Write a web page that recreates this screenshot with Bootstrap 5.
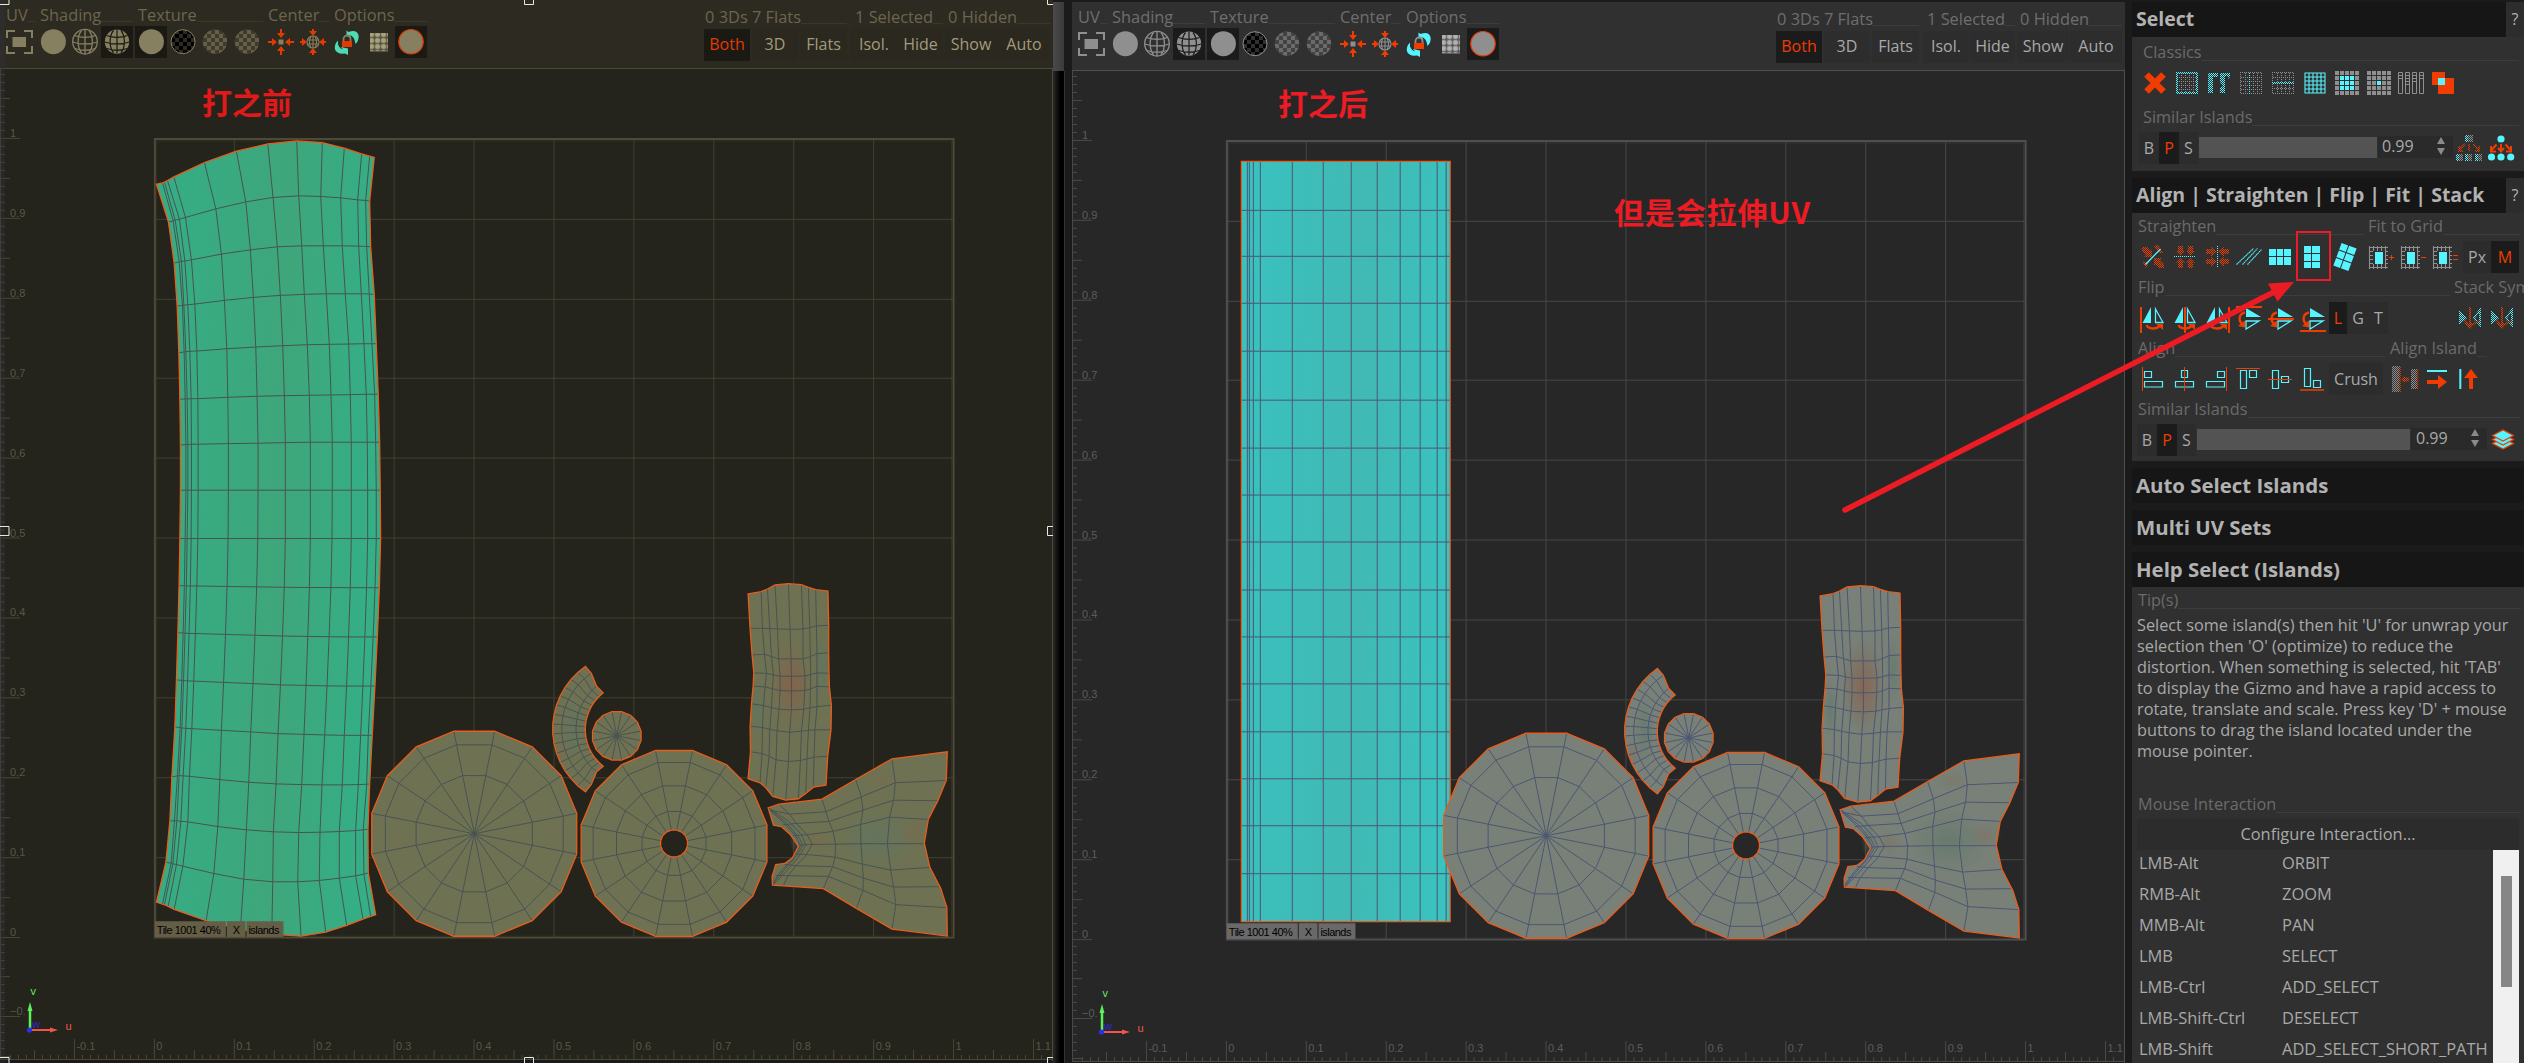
<!DOCTYPE html>
<html lang="en" data-bs-theme="dark">
<head>
<meta charset="utf-8">
<title>UV Editor</title>
<link href="https://cdn.jsdelivr.net/npm/bootstrap@5.3.0/dist/css/bootstrap.min.css" rel="stylesheet">
<style>
body{width:2524px;height:1063px;overflow:hidden;background:#1b1b1b;font-family:"Open Sans","Noto Sans",sans-serif;font-size:16px;line-height:1.3;color:#a9a9a9}
.uvpane{--bar:#303030;--cv:#272727;--edge:#4f4f4f;--fg:#8f8f8f;--dim:#6e6e6e;--txt:#a9a9a9;--hi:#cfcfcf;--org:#f03c00;--cy:#55f4ff;--dk:#1b1b1b;--btn:#2d2d2d;--ln:#3d3d3d;
 --grid:#474747;--tick:#4a4a4a;--num:#5c5c5c;--isl:#788077;--wire:#4c5672;--tag:#696969;width:1053px;height:1061px;flex:none;overflow:hidden;background:#1b1b1b}
.olive{--bar:#2d2a22;--cv:#24231c;--edge:#4e4a37;--fg:#868061;--dim:#6c664c;--txt:#a39b7c;--hi:#c5bd94;--org:#e23a00;--cy:#4fd9b4;--dk:#1b1913;--btn:#2a281f;--ln:#3b3829;
 --grid:#434030;--tick:#4a4737;--num:#5c5742;--isl:#6e7252;--wire:#485352;--tag:#645e47;height:1063px}
.topbar{height:68px;background:var(--bar);padding:8px 0 0 3px}
.grp{margin-right:2px}
.lab{height:18px;white-space:nowrap;color:var(--dim);line-height:14px;padding-left:3px;font-size:16.4px}
.lab i{flex:1;height:14px;border-bottom:1px solid var(--ln)}
.ic{width:32px;height:32px;display:block;flex:none}
.on{background:var(--dk)}
.tb{height:32px;line-height:32px;text-align:center;background:var(--btn);color:var(--txt)}
.tb.on{background:var(--dk);color:var(--org)}
.lowered{margin-top:2px}
.lowered .lab{padding-left:1px}
.lowered .tb{margin-top:1px;line-height:31px}
.stage{display:block;border-top:1px solid var(--edge);border-right:1px solid var(--edge);background:var(--cv)}
.stage text{font-family:"Liberation Sans",sans-serif;font-size:11px}
.gutter{width:19px;flex:none;padding-top:2px}
.gut-a{width:11px;height:69px;background:linear-gradient(90deg,#4a4a4a,#3a3a3a)}
.gut-b{width:12px;height:992px;background:linear-gradient(90deg,#292929,#000 65%);border-right:1px solid #333}
.side{--fg:#8f8f8f;--org:#f03c00;--cy:#55f4ff;--hi:#cfcfcf;width:392px;flex:none;margin-left:7px;padding-top:2px;overflow:hidden}
.hd{height:35px;line-height:34px;margin-bottom:7px;background:#161616;color:#b2b2b2;font-weight:700;font-size:20.4px;padding-left:4px;white-space:nowrap}
.hd.open{margin-bottom:0}
.hd.tool{font-size:19.5px}
.hd span{width:18px;background:#2d2d2d;font-weight:400;font-size:16px;text-align:center}
.bd{background:#303030;margin-bottom:7px}
.lb{height:19px;line-height:19px;margin-bottom:5px;color:#6b6b6b;white-space:nowrap;font-size:16.3px}
.lb i{flex:1;height:18px;border-bottom:1px solid #3d3d3d}
.rw{height:32px;line-height:32px;margin-bottom:5px}
.bt{background:#2c2c2c;text-align:center;flex:none}
.bt.on{background:#1b1b1b;color:#f03c00}
.sld{height:21px;margin:5px 1px 0 1px;background:#535353}
.fld{height:22px;line-height:21px;margin-top:4px;background:#2a2a2a;padding-left:5px}
.tips{height:168px;line-height:21px;padding-left:5px;white-space:nowrap;font-size:16.3px}
.cfg{height:31px;line-height:30px;background:#2c2c2c;margin:0 5px;text-align:center;font-size:16.4px}
.keys div{line-height:25px;height:31px;font-size:16.45px}
.keys span{width:143px}
.sbar{width:26px;background:#f0f0f0;margin-right:5px;padding:26px 7px 0 8px}
.sbar div{height:111px;background:#868686}
.notes{left:0;top:0;width:2524px;height:1063px;pointer-events:none}
.notes text{font-family:"Noto Sans CJK SC",sans-serif;font-weight:700;font-size:30px;fill:#ed1c24}
</style>
</head>
<body class="position-relative">
<svg width="0" height="0" class="position-absolute">
<defs>
<pattern id="ck" width="2" height="2" patternUnits="userSpaceOnUse"><path d="M0 0h1v1h-1zM1 1h1v1h-1z" fill="#fff"/></pattern>
<mask id="off" maskUnits="userSpaceOnUse" x="0" y="0" width="32" height="32"><rect width="32" height="32" fill="url(#ck)"/></mask>
<pattern id="pc" width="8" height="8" patternUnits="userSpaceOnUse"><path d="M0 0h4v4h-4zM4 4h4v4h-4z" style="fill:var(--fg)"/></pattern>
<linearGradient id="gl" x1="0" x2="1" y1="0" y2=".1"><stop offset="0" stop-color="#34ae86"/><stop offset=".35" stop-color="#3aa97f"/><stop offset=".6" stop-color="#3fa67b"/><stop offset="1" stop-color="#34af86"/></linearGradient>
<linearGradient id="gr" x1="0" x2="1" y1="0" y2=".1"><stop offset="0" stop-color="#39c2c0"/><stop offset=".6" stop-color="#41b9b4"/><stop offset="1" stop-color="#3ac2bf"/></linearGradient>
<radialGradient id="hot"><stop offset="0" stop-color="#8e5c46" stop-opacity=".75"/><stop offset=".55" stop-color="#86624b" stop-opacity=".4"/><stop offset="1" stop-color="#7c6a4a" stop-opacity="0"/></radialGradient>
<radialGradient id="cool"><stop offset="0" stop-color="#5b7568" stop-opacity=".55"/><stop offset="1" stop-color="#5b7568" stop-opacity="0"/></radialGradient>
</defs>
<symbol id="fit" viewBox="0 0 32 32"><path d="M4 12V5h8M21 5h8v7M29 20v7h-8M12 27H4v-7" fill="none" style="stroke:var(--fg)" stroke-width="2"/><path d="M9.500 11h13.500v10h-13.500z" style="fill:var(--fg)"/></symbol>
<symbol id="disc" viewBox="0 0 32 32"><circle cx="16.400" cy="15.700" r="12.500" style="fill:var(--fg)"/></symbol>
<symbol id="ring" viewBox="0 0 32 32"><circle cx="16" cy="15.700" r="12.200" style="fill:var(--fg);stroke:var(--org)" stroke-width="1.200"/></symbol>
<symbol id="globe" viewBox="0 0 32 32"><g fill="none" style="stroke:var(--fg)" stroke-width="1.300"><circle cx="16" cy="15.700" r="12.300"/><path d="M16 3.500v24M12.500 4.500C8 10 8 21 12.500 27M20 4.500C24.500 10 24.500 21 20 27M5.500 9.500c6 2.500 15 2.500 21 0M3.800 16c7 2.500 17.500 2.500 24.500 0M5.800 22.500c6 2 14.500 2 20.500 0"/></g></symbol>
<symbol id="globef" viewBox="0 0 32 32"><circle cx="16" cy="15.700" r="12.200" style="fill:var(--fg)"/><g fill="none" style="stroke:var(--dk)" stroke-width="1.200"><path d="M16 3.500v24M12.500 4.500C8 10 8 21 12.500 27M20 4.500C24.500 10 24.500 21 20 27M5.500 9.500c6 2.500 15 2.500 21 0M3.800 16c7 2.500 17.500 2.500 24.500 0M5.800 22.500c6 2 14.500 2 20.500 0"/></g></symbol>
<symbol id="chk" viewBox="0 0 32 32"><circle cx="16" cy="15.700" r="12" fill="url(#pc)" style="stroke:var(--fg)" stroke-width="1"/></symbol>
<symbol id="chkd" viewBox="0 0 32 32"><circle cx="16" cy="15.700" r="12.200" style="fill:var(--fg)" opacity=".62"/><circle cx="16" cy="15.700" r="12.200" fill="url(#pc)" opacity=".38"/></symbol>
<symbol id="ctr" viewBox="0 0 32 32"><path d="M15 3h2v4h3l-4 5-4-5h3zM15 29h2v-4h3l-4-5-4 5h3zM3 15v2h4v3l5-4-5-4v3zM29 15v2h-4v3l-5-4 5-4v3z" style="fill:var(--org)"/><path d="M13.500 13.500h5v5h-5z" style="fill:var(--fg)"/></symbol>
<symbol id="ctr2" viewBox="0 0 32 32"><path d="M15 3h2v2h3l-4 5-4-5h3zM15 29h2v-2h3l-4-5-4 5h3zM3 15v2h2v3l5-4-5-4v3zM29 15v2h-2v3l-5-4 5-4v3z" style="fill:var(--org)"/><g fill="none" style="stroke:var(--fg)" stroke-width="1.100"><circle cx="16" cy="16" r="6"/><path d="M16 10v12M10 14h12M10 18h12M14 10q-3 6 0 12M18 10q3 6 0 12"/></g></symbol>
<symbol id="rot" viewBox="0 0 32 32"><path d="M15.500 10V4.500l2 1.500q8-3 10 3 1 5-3 9-1-8-6-9l2 2.500zM17 22.500v6.500l-3-1.500q-8 1-10-4-1-5 3-9-1 7 5 9l-2-2.500z" style="fill:var(--cy)"/><path d="M12.500 15v-2a3.500 3.500 0 0 1 7 0v2" fill="none" style="stroke:var(--fg)" stroke-width="1.800"/><path d="M11 15h10v6h-10z" style="fill:var(--org)"/></symbol>
<symbol id="plaid" viewBox="0 0 32 32"><path d="M7 7h18v18.500h-18z" style="fill:var(--fg)"/><path d="M8.500 7v18M14.500 7v18M20.500 7v18M7 8.500h18M7 14.500h18M7 20.500h18" style="stroke:var(--hi)" stroke-width="2.600" stroke-opacity=".55"/><path d="M11.500 7v18M17.500 7v18M23.500 7v18M7 11.500h18M7 17.500h18M7 23.500h18" stroke="#222" stroke-width="1.400" stroke-opacity=".45"/></symbol>
<symbol id="x" viewBox="0 0 32 32"><path d="M7.500 7.500l17 17M24.500 7.500l-17 17" style="stroke:var(--org)" stroke-width="6.500"/></symbol>
<symbol id="g1" viewBox="0 0 32 32"><g mask="url(#off)" fill="none" shape-rendering="crispEdges"><path d="M10.500 6v20M14.500 6v20M18.500 6v20M22.500 6v20M6 10.500h20M6 14.500h20M6 18.500h20M6 22.500h20" style="stroke:var(--fg)"/><path d="M6 6h20v20h-20z" style="stroke:var(--cy)" stroke-width="2"/></g></symbol>
<symbol id="g2" viewBox="0 0 32 32"><g mask="url(#off)" style="fill:var(--cy)"><path d="M5 6h10v4h-5v16h-5zM17 6h10v4l-2 2v-3h-3v17h-5v-5l3-2-3-4z"/></g></symbol>
<symbol id="g3" viewBox="0 0 32 32"><g mask="url(#off)" fill="none" shape-rendering="crispEdges"><path d="M5.500 5.500h21v21h-21zM10.500 6v20M18.500 6v20M22.500 6v20M6 10.500h20M6 14.500h20M6 18.500h20M6 22.500h20" style="stroke:var(--fg)"/><path d="M14.500 5v22" style="stroke:var(--cy)"/></g></symbol>
<symbol id="g4" viewBox="0 0 32 32"><g mask="url(#off)" fill="none" shape-rendering="crispEdges"><path d="M5.500 5.500h21v21h-21zM10.500 6v20M14.500 6v20M18.500 6v20M22.500 6v20M6 10.500h20M6 21.500h20" style="stroke:var(--fg)"/><path d="M5 16h22" style="stroke:var(--cy)" stroke-width="2"/></g></symbol>
<symbol id="g5" viewBox="0 0 32 32"><path d="M6 6h20v20h-20zM10 6v20M14 6v20M18 6v20M22 6v20M6 10h20M6 14h20M6 18h20M6 22h20" fill="none" style="stroke:var(--cy)" stroke-width="1.100"/></symbol>
<symbol id="g6" viewBox="0 0 32 32"><path d="M4 5.900h25M4 11h25M4 16h25M4 21h25M4 26h25" style="stroke:var(--fg)" stroke-width="4" stroke-dasharray="4 1"/><path d="M9 11h14M9 16h14M9 21h14" style="stroke:var(--cy)" stroke-width="4" stroke-dasharray="4 1"/></symbol>
<symbol id="g7" viewBox="0 0 32 32"><path d="M4 5.900h25M4 11h25M4 16h25M4 21h25M4 26h25" style="stroke:var(--fg)" stroke-width="4" stroke-dasharray="4 1"/><path d="M14 14h4v4h-4z" style="fill:var(--cy)"/></symbol>
<symbol id="g8" viewBox="0 0 32 32"><path d="M3.500 5.500h4v21h-4zM10.500 5.500h4v21h-4zM17.500 5.500h4v21h-4zM24.500 5.500h4v21h-4zM3 8.500h5M3 11.500h5M10 8.500h5M10 11.500h5M10 14.500h5M10 17.500h5M17 8.500h5M17 11.500h5M17 14.500h5M24 8.500h5M24 11.500h5" fill="none" style="stroke:var(--fg)"/></symbol>
<symbol id="g9" viewBox="0 0 32 32"><path d="M5 5h13v13h-13zM11 11h16v16h-16z" style="fill:var(--org)"/><path d="M11 11h7v7h-7z" style="fill:var(--cy)"/></symbol>
<symbol id="tree" viewBox="0 0 32 32"><g style="fill:var(--cy)"><circle cx="16" cy="7" r="3.600"/><circle cx="6.500" cy="25" r="3.600"/><circle cx="16" cy="25" r="3.600"/><circle cx="25.700" cy="25" r="3.600"/></g><path d="M11.500 12.500l-4.500 5M20.500 12.500l4.500 5M16 12v6M6 14v5.500h5M26 14v5.500h-5M13 16l3 3.500 3-3.500" style="stroke:var(--org);fill:none" stroke-width="2"/></symbol>
<symbol id="treed" viewBox="0 0 32 32"><g mask="url(#off)"><path d="M12 3h8v7h-8zM3 22h7v7h-7z" style="fill:var(--fg)"/><path d="M12 3h3v7h-3zM3 22h3v7h-3zM12 22h3v7h-3zM22 22h3v7h-3z" style="fill:var(--cy)"/><path d="M15 22h4v7h-4zM25 22h4v7h-4z" style="fill:var(--fg)"/><path d="M12 12l-6 6M20 12l6 6M16 12v7M6 14v5h4M26 14v5h-4" style="stroke:var(--org);fill:none" stroke-width="1.800"/></g></symbol>
<symbol id="s1" viewBox="0 0 32 32"><g mask="url(#off)" style="fill:var(--org)"><path d="M5 6h5l4 4 1-2v8h-8l2-2-4-4zM27 27h-5l-4-4-1 2v-8h8l-2 2 4 4zM17 5l4-1 5 8-4 0zM5 20l7 2-3 5z"/></g><path d="M8.500 23.500L23.500 8" style="stroke:var(--cy)" stroke-width="1.300"/></symbol>
<symbol id="s2" viewBox="0 0 32 32"><g mask="url(#off)" style="fill:var(--org)"><path d="M9 5h5v5h2l-4.500 5L7 10h2zM19 5h5v5h2l-4.500 5L17 10h2zM9 27h5v-5h2l-4.500-5L7 22h2zM19 27h5v-5h2l-4.500-5L17 22h2z"/></g><path d="M5 15.500h22" style="stroke:var(--cy)" stroke-dasharray="1 1"/></symbol>
<symbol id="s3" viewBox="0 0 32 32"><g mask="url(#off)" style="fill:var(--org)"><path d="M5 8v5h5v3l6-5.500L10 6v2zM5 18v5h5v3l6-5.500L10 16v2zM28 8v5h-5v3l-6-5.500L23 6v2zM28 18v5h-5v3l-6-5.500L23 16v2z"/></g><path d="M16.500 5v22" style="stroke:var(--cy)" stroke-dasharray="1 1"/></symbol>
<symbol id="s4" viewBox="0 0 32 32"><path d="M3.500 23.500l17-16M9.500 23.500l15-16M14.500 23.500l14-15" style="stroke:var(--cy)" stroke-dasharray="1.600 .5" stroke-width="1.100"/></symbol>
<symbol id="s5" viewBox="0 0 32 32"><path d="M4 8h7v7h-7zM12 8h6v7h-6zM19 8h7v7h-7zM4 16h7v8h-7zM12 16h6v8h-6zM19 16h7v8h-7z" style="fill:var(--cy)"/></symbol>
<symbol id="s6" viewBox="0 0 32 32"><path d="M7 5h7v7h-7zM15 5h8v7h-8zM7 13h7v7h-7zM15 13h8v7h-8zM7 21h7v6h-7zM15 21h8v6h-8z" style="fill:var(--cy)"/></symbol>
<symbol id="s7" viewBox="0 0 32 32"><path transform="rotate(20 16 16)" d="M8 4h7v7h-7zM16 4h8v7h-8zM8 12h7v7h-7zM16 12h8v7h-8zM8 20h7v8h-7zM16 20h8v8h-8z" style="fill:var(--cy)"/></symbol>
<symbol id="fg" viewBox="0 0 32 32"><path d="M7.500 5v23M11.500 5v23M15.500 5v23M19.500 5v23M23.500 5v23M7 6.500h19M7 10.500h19M7 14.500h19M7 18.500h19M7 22.500h19M7 26.500h19" transform="translate(-2 0)" style="stroke:var(--fg)" stroke-width="1.100"/><path d="M9 10h12v13h-12z" fill="#303030"/><path d="M11 11h8v12h-8z" style="fill:var(--cy)"/></symbol>
<symbol id="fp" viewBox="0 0 32 32"><use href="#fg"/><path d="M25 16.500h5M27.500 14v5" style="stroke:var(--org)"/></symbol>
<symbol id="fm" viewBox="0 0 32 32"><use href="#fg"/><path d="M25 16.500h5" style="stroke:var(--org)"/></symbol>
<symbol id="fe" viewBox="0 0 32 32"><use href="#fg"/><path d="M25 14.500h5M25 18.500h5" style="stroke:var(--org)"/></symbol>
<symbol id="tri" viewBox="0 0 32 32"><path d="M14 5v16H5.500z" style="fill:var(--cy)"/><path d="M18.500 7l7.500 13.500h-7.500z" fill="none" style="stroke:var(--cy)" stroke-width="1.300"/><path d="M9.500 23c2 4.500 10 4.500 13 1" fill="none" style="stroke:var(--org)" stroke-width="2.400"/><path d="M19 22h7v6z" style="fill:var(--org)"/></symbol>
<symbol id="f1" viewBox="0 0 32 32"><use href="#tri"/><path d="M4 5v26" style="stroke:var(--org)" stroke-width="2"/></symbol>
<symbol id="f2" viewBox="0 0 32 32"><use href="#tri"/><path d="M16 5v26" style="stroke:var(--org)" stroke-width="2"/></symbol>
<symbol id="f3" viewBox="0 0 32 32"><use href="#tri"/><path d="M28 5v26" style="stroke:var(--org)" stroke-width="2"/></symbol>
<symbol id="vri" viewBox="0 0 32 32"><path d="M13 6v9h15z" style="fill:var(--cy)"/><path d="M13 27v-8h13z" fill="none" style="stroke:var(--cy)" stroke-width="1.300"/><path d="M12 10.500c-6 1-7 8-3 11" fill="none" style="stroke:var(--org)" stroke-width="2.400"/><path d="M5 24l7 1.500v-7z" style="fill:var(--org)"/></symbol>
<symbol id="f4" viewBox="0 0 32 32"><use href="#vri"/><path d="M3 5h26" style="stroke:var(--org)" stroke-width="2"/></symbol>
<symbol id="f5" viewBox="0 0 32 32"><use href="#vri"/><path d="M3 17h26" style="stroke:var(--org)" stroke-width="2"/></symbol>
<symbol id="f6" viewBox="0 0 32 32"><use href="#vri"/><path d="M3 29h26" style="stroke:var(--org)" stroke-width="2"/></symbol>
<symbol id="sy" viewBox="0 0 32 32"><g mask="url(#off)"><path d="M5 8l8 8-8 7z" style="fill:var(--cy)"/><path d="M26 8v15l-6-7z" fill="none" style="stroke:var(--cy)" stroke-width="2"/><path d="M15 5h2v16h4l-5 6-6-6h5z" style="fill:var(--org)"/><path d="M10 18l6 6 9-5" style="stroke:var(--org);fill:none" stroke-width="2"/></g></symbol>
<symbol id="a1" viewBox="0 0 32 32"><g fill="none" style="stroke:var(--cy)"><path d="M7.500 8.500h7v6h-7zM7.500 18.500h18v5.500h-18z" stroke-width="1.200"/></g><path d="M5.500 4v24" style="stroke:var(--org)"/></symbol>
<symbol id="a2" viewBox="0 0 32 32"><g fill="none" style="stroke:var(--cy)"><path d="M12.500 7.500h6v7h-6zM6.500 18.500h18v5.500h-18z" stroke-width="1.200"/></g><path d="M15.500 4v24" style="stroke:var(--org)"/></symbol>
<symbol id="a3" viewBox="0 0 32 32"><g fill="none" style="stroke:var(--cy)"><path d="M16.500 8.500h7v6h-7zM5.500 18.500h18v5.500h-18z" stroke-width="1.200"/></g><path d="M25.500 4v24" style="stroke:var(--org)"/></symbol>
<symbol id="a4" viewBox="0 0 32 32"><g fill="none" style="stroke:var(--cy)"><path d="M7.500 7.500h6v18h-6zM16.500 7.500h7v7h-7z" stroke-width="1.200"/></g><path d="M3 5.500h24" style="stroke:var(--org)"/></symbol>
<symbol id="a5" viewBox="0 0 32 32"><g fill="none" style="stroke:var(--cy)"><path d="M7.500 7.500h6v18h-6zM16.500 13.500h7v6h-7z" stroke-width="1.200"/></g><path d="M3 16.500h24" style="stroke:var(--org)"/></symbol>
<symbol id="a6" viewBox="0 0 32 32"><g fill="none" style="stroke:var(--cy)"><path d="M7.500 5.500h6v18h-6zM16.500 17.500h7v7h-7z" stroke-width="1.200"/></g><path d="M3 27h24" style="stroke:var(--org)" stroke-width="1.500"/></symbol>
<symbol id="i1" viewBox="0 0 32 32"><g mask="url(#off)"><path d="M2 3h8v26h-8zM21 6h6v20h-6z" style="fill:var(--fg)"/><path d="M10 3v26M27.500 6v20" style="stroke:var(--org)" stroke-width="1.500"/><path d="M19 14.500h-4v-2l-4 4 4 4v-2h4z" style="fill:var(--org)"/></g></symbol>
<symbol id="i2" viewBox="0 0 32 32"><path d="M5 8h20" style="stroke:var(--cy)" stroke-width="2"/><path d="M5 17h11v-5l9 7-9 7v-5H5z" style="fill:var(--org)"/></symbol>
<symbol id="i3" viewBox="0 0 32 32"><path d="M6.300 6v20" style="stroke:var(--cy)" stroke-width="2"/><path d="M15 26V15h-5l7-9 7 9h-5v11z" style="fill:var(--org)"/></symbol>
<symbol id="lay" viewBox="0 0 32 32"><g style="fill:var(--cy);stroke:var(--org)" stroke-width="1.200"><path d="M5.500 19.500L16 14l10.500 5.500L16 25z"/><path d="M5.500 15.500L16 10l10.500 5.500L16 21z"/><path d="M5.500 11.500L16 6l10.500 5.500L16 17z"/></g></symbol>
<symbol id="spin" viewBox="0 0 12 20"><path d="M2 8l4-7 4 7zM2 12l4 7 4-7z" fill="#8a8a8a"/></symbol>
</svg>

<template id="bar">
<div class="topbar d-flex">
 <div class="grp"><div class="lab d-flex">UV<i></i></div><svg class="ic"><use href="#fit"/></svg></div>
 <div class="grp"><div class="lab d-flex">Shading<i></i></div><div class="d-flex"><svg class="ic"><use href="#disc"/></svg><svg class="ic"><use href="#globe"/></svg><svg class="ic on"><use href="#globef"/></svg></div></div>
 <div class="grp"><div class="lab d-flex">Texture<i></i></div><div class="d-flex"><svg class="ic on"><use href="#disc"/></svg><svg class="ic"><use href="#chk"/></svg><svg class="ic"><use href="#chkd"/></svg><svg class="ic"><use href="#chkd"/></svg></div></div>
 <div class="grp"><div class="lab d-flex">Center<i></i></div><div class="d-flex"><svg class="ic"><use href="#ctr"/></svg><svg class="ic"><use href="#ctr2"/></svg></div></div>
 <div class="grp"><div class="lab d-flex">Options<i></i></div><div class="d-flex"><svg class="ic"><use href="#rot"/></svg><svg class="ic"><use href="#plaid"/></svg><svg class="ic on"><use href="#ring"/></svg></div></div>
 <div class="lowered ms-auto me-1"><div class="lab d-flex">0 3Ds 7 Flats<i></i></div><div class="d-flex" style="gap:2px"><div class="tb on" style="width:46px">Both</div><div class="tb" style="width:46px">3D</div><div class="tb" style="width:47px">Flats</div></div></div>
 <div class="lowered"><div class="lab d-flex" style="padding-left:4px">1 Selected<i></i></div><div class="d-flex" style="gap:1px"><div class="tb" style="width:46px">Isol.</div><div class="tb" style="width:45px">Hide</div></div></div>
 <div class="lowered" style="margin:2px 3px 0 2px"><div class="lab d-flex" style="padding-left:3px">0 Hidden<i></i></div><div class="d-flex" style="gap:1px"><div class="tb" style="width:52px">Show</div><div class="tb" style="width:52px">Auto</div></div></div>
</div>
</template>

<div class="d-flex h-100">
 <section class="uvpane olive" data-mesh="bent"></section>
 <div class="gutter"><div class="gut-a"></div><div class="gut-b"></div></div>
 <section class="uvpane" style="margin-top:2px" data-mesh="straight"></section>
 <aside class="side">
  <div class="hd open tool d-flex justify-content-between">Select<span>?</span></div>
  <div class="bd" style="padding:6px 5px 2px 7px">
   <div class="lb d-flex ps-1">Classics<i></i></div>
   <div class="rw d-flex" style="margin-bottom:9px"><svg class="ic"><use href="#x"/></svg><svg class="ic"><use href="#g1"/></svg><svg class="ic"><use href="#g2"/></svg><svg class="ic"><use href="#g3"/></svg><svg class="ic"><use href="#g4"/></svg><svg class="ic"><use href="#g5"/></svg><svg class="ic"><use href="#g6"/></svg><svg class="ic"><use href="#g7"/></svg><svg class="ic"><use href="#g8"/></svg><svg class="ic"><use href="#g9"/></svg></div>
   <div class="lb d-flex ps-1">Similar Islands<i></i></div>
   <div class="rw d-flex"><div class="bt" style="width:20px">B</div><div class="bt on" style="width:20px">P</div><div class="bt" style="width:19px">S</div><div class="sld" style="width:178px"></div><div class="fld d-flex justify-content-between" style="width:75px;padding-left:4px">0.99<svg width="12" height="20" style="margin-right:6px"><use href="#spin"/></svg></div><svg class="ic"><use href="#treed"/></svg><svg class="ic"><use href="#tree"/></svg></div>
  </div>
  <div class="hd open tool d-flex justify-content-between">Align | Straighten | Flip | Fit | Stack<span>?</span></div>
  <div class="bd overflow-hidden" style="padding:4px 0 .1px 5px">
   <div class="d-flex"><div style="width:227px"><div class="lb d-flex" style="padding-left:1px">Straighten<i></i></div><div class="rw d-flex"><svg class="ic"><use href="#s1"/></svg><svg class="ic"><use href="#s2"/></svg><svg class="ic"><use href="#s3"/></svg><svg class="ic"><use href="#s4"/></svg><svg class="ic"><use href="#s5"/></svg><svg class="ic"><use href="#s6"/></svg><svg class="ic"><use href="#s7"/></svg></div></div>
   <div style="width:157px"><div class="lb d-flex" style="padding-left:4px">Fit to Grid<i></i></div><div class="rw d-flex"><svg class="ic"><use href="#fp"/></svg><svg class="ic"><use href="#fm"/></svg><svg class="ic" style="margin-right:3px"><use href="#fe"/></svg><div class="bt" style="width:28px">Px</div><div class="bt on" style="width:28px">M</div></div></div></div>
   <div class="d-flex"><div style="width:315px" class="me-1"><div class="lb d-flex" style="padding-left:1px">Flip<i></i></div><div class="rw d-flex"><svg class="ic"><use href="#f1"/></svg><svg class="ic"><use href="#f2"/></svg><svg class="ic"><use href="#f3"/></svg><svg class="ic"><use href="#f4"/></svg><svg class="ic"><use href="#f5"/></svg><svg class="ic"><use href="#f6"/></svg><div class="bt on" style="width:18px">L</div><div class="bt" style="width:22px">G</div><div class="bt" style="width:19px">T</div></div></div>
   <div style="width:70px"><div class="lb">Stack Sym</div><div class="rw d-flex"><svg class="ic"><use href="#sy"/></svg><svg class="ic"><use href="#sy"/></svg></div></div></div>
   <div class="d-flex"><div style="width:248px;margin-right:5px"><div class="lb d-flex" style="padding-left:1px">Align<i></i></div><div class="rw d-flex"><svg class="ic"><use href="#a1"/></svg><svg class="ic"><use href="#a2"/></svg><svg class="ic"><use href="#a3"/></svg><svg class="ic"><use href="#a4"/></svg><svg class="ic"><use href="#a5"/></svg><svg class="ic"><use href="#a6"/></svg><div class="bt" style="width:54px">Crush</div></div></div>
   <div style="width:97px"><div class="lb d-flex">Align Island<i></i></div><div class="rw d-flex"><svg class="ic"><use href="#i1"/></svg><svg class="ic"><use href="#i2"/></svg><svg class="ic"><use href="#i3"/></svg></div></div></div>
   <div class="lb d-flex" style="padding:0 3px 0 1px">Similar Islands<i></i></div>
   <div class="rw d-flex"><div class="bt" style="width:20px">B</div><div class="bt on" style="width:20px">P</div><div class="bt" style="width:19px">S</div><div class="sld" style="width:213px"></div><div class="fld d-flex justify-content-between" style="width:76px">0.99<svg width="12" height="20" style="margin-right:6px"><use href="#spin"/></svg></div><svg class="ic"><use href="#lay"/></svg></div>
  </div>
  <div class="hd">Auto Select Islands</div>
  <div class="hd">Multi UV Sets</div>
  <div class="hd open">Help Select (Islands)</div>
  <div class="bd" style="padding-top:4px;height:480px">
   <div class="lb d-flex" style="padding:0 3px 0 6px">Tip(s)<i></i></div>
   <div class="tips">Select some island(s) then hit 'U' for unwrap your<br>selection then 'O' (optimize) to reduce the<br>distortion. When something is selected, hit 'TAB'<br>to display the Gizmo and have a rapid access to<br>rotate, translate and scale. Press key 'D' + mouse<br>buttons to drag the island located under the<br>mouse pointer.</div>
   <div class="lb d-flex" style="padding:0 3px 0 6px;margin-top:12px">Mouse Interaction<i></i></div>
   <div class="cfg">Configure Interaction...</div>
   <div class="d-flex justify-content-between" style="height:213px">
    <div class="keys" style="padding-left:7px"><div class="d-flex"><span>LMB-Alt</span>ORBIT</div><div class="d-flex"><span>RMB-Alt</span>ZOOM</div><div class="d-flex"><span>MMB-Alt</span>PAN</div><div class="d-flex"><span>LMB</span>SELECT</div><div class="d-flex"><span>LMB-Ctrl</span>ADD_SELECT</div><div class="d-flex"><span>LMB-Shift-Ctrl</span>DESELECT</div><div class="d-flex"><span>LMB-Shift</span>ADD_SELECT_SHORT_PATH</div></div>
    <div class="sbar"><div></div></div>
   </div>
  </div>
 </aside>
</div>

<svg class="notes position-absolute" viewBox="0 0 2524 1063">
 <path d="M0 0h5v1063h-5z" fill="#34343c" fill-opacity=".35"/>
 <g fill="none" stroke="#e8e8e8"><path d="M-1 -4.500h10v9h-10zM524.500-4.500h9v9h-9zM1053 4.500h-5.500V-1M-1 526.500h10v9h-10zM1053 526.500h-5.500v9h5.500M-1 1057.500h10v9h-10zM524.500 1057.500h9v9h-9zM1053 1057.500h-5.500v9"/></g>
 <text x="202" y="114" style="fill:#e0191b">打之前</text>
 <text x="1278" y="115">打之后</text>
 <text x="1614" y="224" textLength="196">但是会拉伸UV</text>
 <path d="M2297 232h33v48h-33z" fill="none" stroke="#ed1c24" stroke-width="2"/>
 <path d="M1845 510L2274 292" stroke="#ed1c24" stroke-width="5.500" stroke-linecap="round"/>
 <path d="M2294 282l-26 1.500 9.500 18z" fill="#ed1c24"/>
</svg>

<script>
const GX = i => 154.5 + 80 * i, GY = i => Math.round(938 - 79.93 * i) + .5;
// vertex rows of the long island, top to bottom
const bent = (() => {
  const top = [
   [[109,127,133,142,161,253,349,443,530,607,673,725,749,763],[192,188,186,181,170,127,93,71,62,67,84,101,108,112]],
   [[145,159,165,178,196,287,377,459,536,602,662,713,737,749],[306,302,300,297,292,266,245,232,227,229,233,239,241,243]],
   [[162,177,184,194,214,304,391,472,545,610,667,716,740,752],[429,425,424,423,419,402,389,380,377,377,377,378,379,380]],
   [[171,187,191,203,224,313,400,481,553,619,676,724,748,763],[558,556,555,554,552,541,532,526,523,521,521,521,522,523]],
   [[176,192,197,209,230,320,407,488,562,628,686,732,756,769],[698,696,695,694,693,686,681,677,674,673,672,671,671,671]],
   [[179,195,201,213,233,323,411,493,568,633,691,739,764,775],[838,837,837,836,836,832,829,827,826,825,824,823,823,822]],
   [[181,197,203,214,234,325,414,496,571,637,694,742,767,779],[975,974,974,973,973,971,970,968,967,967,967,967,967,967]],
   [[181,197,203,214,234,325,414,496,571,637,694,743,769,781],Array(14).fill(1111)],
   [[179,195,201,213,233,324,413,496,571,636,694,743,769,782],Array(14).fill(1256)]
  ].map(([x, y]) => x.map((v, i) => [120.3 + v / 3, 120.3 + y[i] / 3]));
  const bot = [
   [[164,180,185,197,215,304,392,474,552,614,673,722,745,757],[82,84,85,86,87,92,97,102,104,106,107,107,107,107]],
   [[155,172,177,189,208,299,386,468,545,606,667,715,740,749],[232,229,228,229,230,240,248,253,255,256,256,255,254,253]],
   [[149,163,170,182,203,293,379,460,536,600,658,707,730,744],[364,364,364,365,367,381,391,397,399,398,396,393,391,389]],
   [[137,153,158,169,188,281,371,458,533,598,658,707,732,745],[488,491,493,495,500,522,539,547,547,543,536,529,524,520]],
   [[109,127,133,144,162,258,361,455,543,617,680,729,752,767],[608,614,616,621,630,664,690,704,710,698,678,659,651,646]]
  ].map(([x, y]) => x.map((v, i) => [120.3 + v / 3, 700.3 + y[i] / 3]));
  const mid = [.25, .5, .75].map(t => top[8].map((p, i) => [p[0] + (bot[0][i][0] - p[0]) * Math.pow(t, 1.35), p[1] + (bot[0][i][1] - p[1]) * t]));
  return [...top, ...mid, ...bot];
})();
const straight = (() => {
  const xs = [124,142,148,160,181,276,368,454,532,601,661,712,737,751].map(v => 127.9 + v / 3);
  const ys = [159.3, 208.3, 254.3, 301, 349.3, 398.3];
  for (let i = 1; i <= 10; i++) ys.push(398.3 + 47.34 * i);
  ys.push(920.3);
  return ys.map(y => xs.map(x => [Math.round(x) + .5, Math.round(y) + .5]));
})();
const q = a => a.map(p => [530.5 + p[0] / 3, 560.2 + p[1] / 3]);
const pl = a => 'M' + a.map(p => p[0].toFixed(1) + ' ' + p[1].toFixed(1)).join('L');
const wire = d => `<path d="${d}" fill="none" style="stroke:var(--wire)" stroke-width="1"/>`;
const rim = (d, fill, extra = '') => [`<path d="${d}" style="fill:${fill}" fill-rule="evenodd"/>${extra}`, `<path d="${d}" fill="none" stroke="#ea5c1c" stroke-width="1.3"/>`];
function mesh(rows, fill, tint) {
  const n = rows[0].length - 1;
  const col = j => rows.map(r => r[j]);
  const out = pl([...rows[0], ...col(n), ...[...rows[rows.length - 1]].reverse(), ...col(0).reverse()]) + 'Z';
  let w = rows.slice(1, -1).map(pl).join('');
  for (let j = 1; j < n; j++) w += pl(col(j));
  const [a, b] = rim(out, fill, tint ? tint.map(t => `<ellipse ${t}/>`).join('') : '');
  return a + wire(w) + b;
}
const gon = (cx, cy, r) => Array.from({length: 16}, (_, i) => { const t = (i + .5) * Math.PI / 8; return [cx + r * Math.cos(t), cy + r * Math.sin(t)]; });
function wheel(cx, cy, r, rings, hole) {
  const o = gon(cx, cy, r), h = gon(cx, cy, hole || 0);
  const [a, b] = rim(pl(o) + 'Z' + (hole ? pl(h) + 'Z' : ''), 'var(--isl)');
  return a + wire(o.map((p, i) => pl([h[i], p])).join('') + rings.map(k => pl(gon(cx, cy, r * k)) + 'Z').join('')) + b;
}
function crescent() {
  const arcs = [[297.6, 508.5, 229.6, 188.5], [296, 508, 201, 167], [302, 508.5, 164, 128.5], [305, 510, 139, 110]];
  const rows = [];
  for (let k = 0; k <= 15; k++) rows.push(q(arcs.map(([x, y, r, h]) => { const m = Math.asin(h / r), t = -m + 2 * m * k / 15; return [x - r * Math.cos(t), y + r * Math.sin(t)]; })));
  return mesh(rows, 'var(--isl)', ['cx="573" cy="728" rx="11" ry="35" fill="url(#cool)"', 'cx="562" cy="752" rx="7" ry="14" fill="url(#hot)" opacity=".4"']);
}
const strap = [
 [[655,694,713,736,776,815,836,858,895],[103,96,88,76,72,75,83,90,94]],
 [[661,698,720,743,781,820,840,860,897],[206,206,207,208,209,208,204,199,197]],
 [[667,704,725,747,784,820,842,862,897],[286,284,291,298,298,298,291,282,280]],
 [[672,710,731,751,785,826,843,862,898],[340,341,346,350,350,349,345,340,341]],
 [[670,706,728,751,785,825,842,862,899],[380,382,388,393,394,393,388,380,382]],
 [[665,701,725,748,785,822,841,862,905],[433,438,444,449,451,449,445,441,437]],
 [[661,698,720,742,780,815,836,856,904],[500,504,509,514,518,515,512,511,511]],
 [[662,697,718,739,776,812,832,853,894],[577,582,590,601,606,603,598,593,590]],
 [[655,691,708,729,768,806,828,851,889],[658,670,685,711,722,718,702,683,677]]
].map(([x, y]) => q(x.map((v, i) => [v, y[i]])));
function fan() {
  const o = pl(q([[715,745],[748,734],[877,719],[978,660],[1087,598],[1253,577],[1250,663],[1225,724],[1196,780],[1184,851],[1201,924],[1234,988],[1252,1045],[1253,1130],[1087,1109],[980,1047],[881,988],[728,977],[727,952],[738,916],[765,912],[788,895],[806,861],[782,826],[755,802],[731,797]])) + 'Z';
  const w = [
   [[806,857],[848,855],[918,854],[994,853],[1073,853],[1184,853]],
   [[790,829],[832,826],[910,816],[993,795],[1080,773],[1196,780]],
   [[760,796],[800,792],[898,786],[1000,752],[1092,722],[1225,724]],
   [[722,752],[779,764],[889,757],[995,712],[1097,670],[1250,663]],
   [[795,884],[825,885],[916,893],[998,914],[1083,932],[1201,924]],
   [[765,915],[799,919],[909,922],[1001,956],[1092,983],[1234,982]],
   [[738,948],[775,949],[896,951],[1000,993],[1099,1036],[1252,1045]],
   [[877,719],[889,757],[898,786],[910,816],[918,854],[916,893],[909,922],[896,951],[881,988]],
   [[978,660],[995,712],[1000,752],[993,795],[994,853],[998,914],[1001,956],[1000,993],[980,1047]],
   [[1087,598],[1097,670],[1092,722],[1080,773],[1073,853],[1083,932],[1092,983],[1099,1036],[1087,1109]],
   [[748,734],[779,764],[800,792],[832,826],[848,855],[825,893],[799,919],[775,949],[762,977]],
   [[718,746],[777,785],[815,826],[829,857],[805,895],[770,935],[730,977]],
   [[718,748],[770,790],[810,838],[820,858],[800,890],[765,930],[728,975]],
   [[720,752],[762,790],[798,830],[813,858],[790,898],[758,930],[728,972]]
  ].map(a => pl(q(a))).join('');
  const [a, b] = rim(o, 'var(--isl)', '<ellipse cx="878" cy="840" rx="40" ry="32" fill="url(#cool)"/><ellipse cx="797" cy="838" rx="7" ry="20" fill="url(#cool)"/><ellipse cx="914" cy="834" rx="17" ry="13" fill="url(#hot)" opacity=".35"/><ellipse cx="818" cy="842" rx="12" ry="12" fill="url(#hot)" opacity=".35"/><ellipse cx="782" cy="812" rx="7" ry="4" fill="url(#hot)" opacity=".6"/><ellipse cx="882" cy="780" rx="18" ry="10" fill="url(#hot)" opacity=".25"/>');
  return a + wire(w) + b;
}
function stage(kind) {
  let g = '', t = '', k = '';
  for (let i = 1; i < 10; i++) g += `M${GX(i)} ${GY(0)}V${GY(10)}M${GX(0)} ${GY(i)}H${GX(10)}`;
  for (let n = -19; n <= 112; n++) {
    const x = GX(n / 10), len = n % 10 === 0 ? 20 : n % 5 === 0 ? 9 : 4;
    if (x > 5 && x < 1050) t += `M${x} 1060v${-len}`;
    if (n % 10 === 0 && n > -19) k += `<text x="${x + 2}" y="1051">${n / 100}</text>`;
  }
  for (let n = -15; n <= 108; n++) {
    const y = 938.5 - 7.993 * n, len = n % 10 === 0 ? 20 : n % 5 === 0 ? 10 : 5;
    if (y > 70) t += `M0 ${Math.round(y) - .5}h${len}`;
    if (n % 10 === 0) k += `<text x="10" y="${(y - 2).toFixed(0)}">${n === -10 ? '−0.' : n / 100}</text>`;
  }
  const tag = (x, w, s, l) => `<path d="M${x} 922h${w}v16h-${w}z" style="fill:var(--tag)"/><text x="${x + (s === 'X' ? 6 : 2)}" y="935" fill="#000" textLength="${l}">${s}</text>`;
  const b = kind === 'bent';
  return `<svg class="stage" width="1053" height="993" viewBox="0 69 1053 993">
  <path d="M0 1061h1053v3H0z" fill="#1b1a17"/>
  <path d="${g}" fill="none" style="stroke:var(--grid)"/>
  <path d="M155 139h799.500v799.500h-799.500z" fill="none" style="stroke:var(--edge)" stroke-width="2"/><path d="M156.500 141h796v796h-796z" fill="none" style="stroke:var(--grid)" stroke-opacity=".5"/>
  <path d="${t}M.5 69V1061M0 1060.500H1053" fill="none" style="stroke:var(--tick)"/><g style="fill:var(--num)">${k}</g>
  ${mesh(b ? bent : straight, b ? 'url(#gl)' : 'url(#gr)')}
  ${wheel(474.700, 834.500, 104.600, [.868, .567])}${wheel(674.700, 844.200, 94.800, [.871, .62, .344], 13.700)}${wheel(617.400, 736.500, 24.800, [])}
  ${crescent()}${mesh(strap, 'var(--isl)', ['cx="792" cy="685" rx="22" ry="48" fill="url(#hot)"', 'cx="822" cy="668" rx="8" ry="34" fill="url(#cool)"', 'cx="759" cy="708" rx="8" ry="30" fill="url(#cool)"'])}${fan()}
  ${tag(155, 71, 'Tile 1001 40%', 64)}${tag(227, 18.700, 'X', 7)}${tag(246.700, 37, 'islands', 31)}
  <path d="M30 1031V1010" stroke="#5ef05a" stroke-width="2.500"/><path d="M27.500 1012h5l-2.500-9z" fill="#5ef05a"/>
  <path d="M30 1031H52" stroke="#f4564c" stroke-width="2"/><path d="M50 1028.500v5l8-2.500z" fill="#f4564c"/><circle cx="29.500" cy="1031" r="2.600" fill="#2d2df0"/>
  <text x="30.500" y="996" fill="#5ef05a">v</text><text x="32" y="1029" fill="#2d2dd0" font-size="9">w</text><text x="65.500" y="1031" fill="#f4564c">u</text></svg>`;
}
document.querySelectorAll('.uvpane').forEach(p => {
  p.append(document.getElementById('bar').content.cloneNode(true));
  p.insertAdjacentHTML('beforeend', stage(p.dataset.mesh));
});
</script>
<script src="https://cdn.jsdelivr.net/npm/bootstrap@5.3.0/dist/js/bootstrap.bundle.min.js"></script>
</body>
</html>
